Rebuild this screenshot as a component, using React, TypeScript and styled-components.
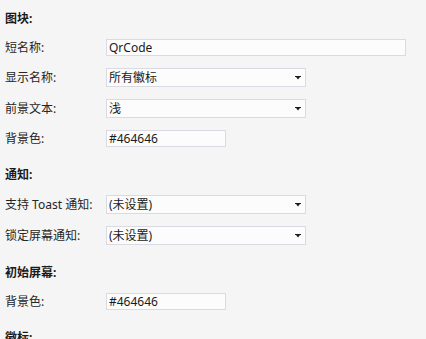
import React from "react";
import styled, { createGlobalStyle } from "styled-components";

const GlobalStyle = createGlobalStyle`
  html, body {
    margin: 0;
    padding: 0;
    background: #f5f5f5;
    overflow: hidden;
  }
  body {
    font-family: "Noto Sans", "Noto Sans CJK SC", sans-serif;
    font-size: 12px;
    color: #1e1e1e;
  }
`;

const Page = styled.div`
  display: flex;
  flex-direction: column;
  gap: 20px;
  padding: 11px 5px 0;
`;

const Section = styled.section`
  display: flex;
  flex-direction: column;
`;

const SectionTitle = styled.h3`
  margin: 0 0 12px;
  font-size: 12px;
  font-weight: 700;
  line-height: 16px;
  color: #1a1a1a;
`;

const Rows = styled.div`
  display: flex;
  flex-direction: column;
  gap: 12px;
`;

const Row = styled.div`
  display: flex;
  align-items: center;
`;

const Label = styled.label`
  width: 101px;
  flex-shrink: 0;
  line-height: 16px;
  white-space: nowrap;
  color: #262626;
`;

const TextBox = styled.input<{ $width: number }>`
  box-sizing: border-box;
  width: ${(p) => p.$width}px;
  height: 17px;
  margin: 0;
  padding: 0 2px;
  border: 1px solid #dadae3;
  border-radius: 0;
  background: #fcfcfc;
  font: inherit;
  font-size: 12px;
  color: #1a1a1a;
  outline: none;
`;

const SelectBox = styled.div`
  box-sizing: border-box;
  display: flex;
  align-items: center;
  justify-content: space-between;
  width: 200px;
  height: 19px;
  padding: 0 4px 0 2px;
  border: 1px solid #dadae3;
  background: #fcfcfc;
  line-height: 16px;
  color: #1a1a1a;
`;

const Caret = () => (
  <svg width="6" height="4" viewBox="0 0 6 4" aria-hidden>
    <path d="M0 0h6v1H0z M1 1h4L3 3.6z" fill="#1e1e1e" />
  </svg>
);

type Field =
  | { label: string; kind: "text"; value: string; width: number }
  | { label: string; kind: "select"; value: string };

const sections: { title: string; fields: Field[] }[] = [
  {
    title: "图块:",
    fields: [
      { label: "短名称:", kind: "text", value: "QrCode", width: 300 },
      { label: "显示名称:", kind: "select", value: "所有徽标" },
      { label: "前景文本:", kind: "select", value: "浅" },
      { label: "背景色:", kind: "text", value: "#464646", width: 120 },
    ],
  },
  {
    title: "通知:",
    fields: [
      { label: "支持 Toast 通知:", kind: "select", value: "(未设置)" },
      { label: "锁定屏幕通知:", kind: "select", value: "(未设置)" },
    ],
  },
  {
    title: "初始屏幕:",
    fields: [{ label: "背景色:", kind: "text", value: "#464646", width: 120 }],
  },
  {
    title: "徽标:",
    fields: [],
  },
];

export default function App() {
  return (
    <>
      <GlobalStyle />
      <Page>
        {sections.map((s) => (
          <Section key={s.title}>
            <SectionTitle>{s.title}</SectionTitle>
            {s.fields.length > 0 && (
              <Rows>
                {s.fields.map((f, i) => (
                  <Row key={i}>
                    <Label>{f.label}</Label>
                    {f.kind === "text" ? (
                      <TextBox $width={f.width} defaultValue={f.value} readOnly />
                    ) : (
                      <SelectBox>
                        <span>{f.value}</span>
                        <Caret />
                      </SelectBox>
                    )}
                  </Row>
                ))}
              </Rows>
            )}
          </Section>
        ))}
      </Page>
    </>
  );
}
